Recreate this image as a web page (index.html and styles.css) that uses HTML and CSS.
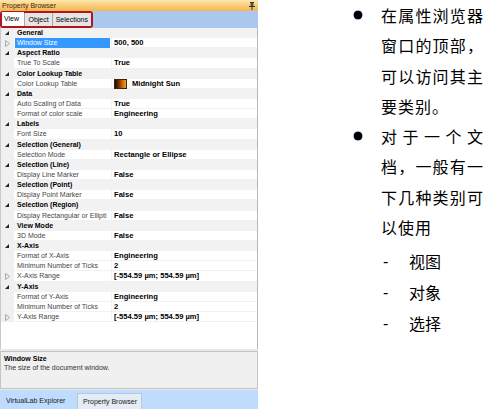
FILE: index.html
```html
<!DOCTYPE html>
<html>
<head>
<meta charset="utf-8">
<link rel="stylesheet" href="styles.css">
</head>
<body>
<div class="page">
  <div class="panel">
    <div class="titlebar">
      <span class="title">Property Browser</span>
      <svg class="pin" width="6" height="8" viewBox="0 0 6 8"><rect x="1" y="0" width="4" height="1" fill="#333"/><rect x="1.5" y="1" width="3" height="3" fill="#555"/><rect x="0" y="4" width="6" height="1" fill="#333"/><rect x="2.5" y="5" width="1" height="3" fill="#333"/></svg>
    </div>
    <div class="tabstrip">
      <div class="tabs">
        <div class="tab active">View</div>
        <div class="tab">Object</div>
        <div class="tab">Selections</div>
      </div>
    </div>
    <div class="grid">
      <div class="row cat"><span class="gut"><i class="tri"></i></span><span class="name">General</span></div>
      <div class="row sel"><span class="gut"><svg class="open" width="5" height="7" viewBox="0 0 5 7"><polygon points="0.5,0.5 4.5,3.5 0.5,6.5" fill="none" stroke="#a8a8a8" stroke-width="1"/></svg></span><span class="name">Window Size</span><span class="val">500, 500</span></div>
      <div class="row cat"><span class="gut"><i class="tri"></i></span><span class="name">Aspect Ratio</span></div>
      <div class="row"><span class="gut"></span><span class="name">True To Scale</span><span class="val">True</span></div>
      <div class="row cat"><span class="gut"><i class="tri"></i></span><span class="name">Color Lookup Table</span></div>
      <div class="row"><span class="gut"></span><span class="name">Color Lookup Table</span><span class="val"><i class="swatch"></i>Midnight Sun</span></div>
      <div class="row cat"><span class="gut"><i class="tri"></i></span><span class="name">Data</span></div>
      <div class="row"><span class="gut"></span><span class="name">Auto Scaling of Data</span><span class="val">True</span></div>
      <div class="row"><span class="gut"></span><span class="name">Format of color scale</span><span class="val">Engineering</span></div>
      <div class="row cat"><span class="gut"><i class="tri"></i></span><span class="name">Labels</span></div>
      <div class="row"><span class="gut"></span><span class="name">Font Size</span><span class="val">10</span></div>
      <div class="row cat"><span class="gut"><i class="tri"></i></span><span class="name">Selection (General)</span></div>
      <div class="row"><span class="gut"></span><span class="name">Selection Mode</span><span class="val">Rectangle or Ellipse</span></div>
      <div class="row cat"><span class="gut"><i class="tri"></i></span><span class="name">Selection (Line)</span></div>
      <div class="row"><span class="gut"></span><span class="name">Display Line Marker</span><span class="val">False</span></div>
      <div class="row cat"><span class="gut"><i class="tri"></i></span><span class="name">Selection (Point)</span></div>
      <div class="row"><span class="gut"></span><span class="name">Display Point Marker</span><span class="val">False</span></div>
      <div class="row cat"><span class="gut"><i class="tri"></i></span><span class="name">Selection (Region)</span></div>
      <div class="row"><span class="gut"></span><span class="name">Display Rectangular or Ellipti</span><span class="val">False</span></div>
      <div class="row cat"><span class="gut"><i class="tri"></i></span><span class="name">View Mode</span></div>
      <div class="row"><span class="gut"></span><span class="name">3D Mode</span><span class="val">False</span></div>
      <div class="row cat"><span class="gut"><i class="tri"></i></span><span class="name">X-Axis</span></div>
      <div class="row"><span class="gut"></span><span class="name">Format of X-Axis</span><span class="val">Engineering</span></div>
      <div class="row"><span class="gut"></span><span class="name">Minimum Number of Ticks</span><span class="val">2</span></div>
      <div class="row"><span class="gut"><svg class="open" width="5" height="7" viewBox="0 0 5 7"><polygon points="0.5,0.5 4.5,3.5 0.5,6.5" fill="none" stroke="#a8a8a8" stroke-width="1"/></svg></span><span class="name">X-Axis Range</span><span class="val">[-554.59 µm; 554.59 µm]</span></div>
      <div class="row cat"><span class="gut"><i class="tri"></i></span><span class="name">Y-Axis</span></div>
      <div class="row"><span class="gut"></span><span class="name">Format of Y-Axis</span><span class="val">Engineering</span></div>
      <div class="row"><span class="gut"></span><span class="name">Minimum Number of Ticks</span><span class="val">2</span></div>
      <div class="row"><span class="gut"><svg class="open" width="5" height="7" viewBox="0 0 5 7"><polygon points="0.5,0.5 4.5,3.5 0.5,6.5" fill="none" stroke="#a8a8a8" stroke-width="1"/></svg></span><span class="name">Y-Axis Range</span><span class="val">[-554.59 µm; 554.59 µm]</span></div>
    </div>
    <div class="desc">
      <div class="desc-title">Window Size</div>
      <div class="desc-text">The size of the document window.</div>
    </div>
    <div class="bottomtabs">
      <div class="btab">VirtualLab Explorer</div>
      <div class="btab current">Property Browser</div>
    </div>
  </div>
  <div class="notes">
    <div class="item">
      <span class="bullet"><i class="dot"></i></span>
      <div class="item-text">在属性浏览器窗口的顶部，可以访问其主要类别。</div>
    </div>
    <div class="item">
      <span class="bullet"><i class="dot"></i></span>
      <div class="item-text">对于一个文档，一般有一下几种类别可以使用</div>
    </div>
    <div class="sublist">
      <div class="subitem"><span class="dash">-</span><span>视图</span></div>
      <div class="subitem"><span class="dash">-</span><span>对象</span></div>
      <div class="subitem"><span class="dash">-</span><span>选择</span></div>
    </div>
  </div>
</div>
</body>
</html>
```

FILE: styles.css
```css
html, body {
  margin: 0;
  padding: 0;
  background: #ffffff;
}

.page {
  width: 490px;
  height: 409px;
  display: flex;
  overflow: hidden;
}

.panel {
  width: 258px;
  height: 409px;
  flex: none;
  display: flex;
  flex-direction: column;
  background: #e9e9e9;
  font-family: "Liberation Sans", Arial, sans-serif;
  font-size: 7px;
  color: #000;
}

.titlebar {
  height: 11px;
  flex: none;
  display: flex;
  align-items: center;
  justify-content: space-between;
  padding: 0 2px 0 2px;
  background: linear-gradient(to bottom, #fde8b0 0%, #f9cf7e 45%, #f5b650 100%);
  box-sizing: border-box;
}

.title {
  color: #3a2a10;
  line-height: 11px;
}

.pin {
  display: block;
  margin-right: 1px;
}

.tabstrip {
  height: 17px;
  flex: none;
  background: #a9c7ef;
  display: flex;
  align-items: stretch;
}

.tabs {
  display: flex;
  align-items: flex-end;
  width: 93px;
  box-sizing: border-box;
  border: 2px solid #b3141c;
  border-radius: 3px;
  padding: 0;
  background: #dcdcdc;
}

.tab {
  height: 13px;
  line-height: 13px;
  padding: 0 3px;
  background: #e6e6e6;
  border-left: 1px solid #a8a8a8;
  color: #000;
}

.tab.active {
  background: #ffffff;
  border-left: none;
  width: 24px;
  height: 14px;
  padding: 0 0 0 2px;
}

.tab:nth-child(2) {
  width: 22px;
}

.grid {
  height: 321px;
  flex: none;
  background: #ffffff;
  border-left: 1px solid #c9c9c9;
  border-right: 1px solid #b8b8b8;
  box-sizing: border-box;
  overflow: hidden;
}

.row {
  display: grid;
  grid-template-columns: 13px 97px 1fr;
  height: 10.15px;
  line-height: 10.15px;
  box-sizing: border-box;
  box-shadow: inset 0 -1px 0 #f1f1f1;
}

.gut {
  background: #f0f0f0;
  display: flex;
  align-items: center;
  padding-left: 4px;
}

.row.cat {
  background: #f2f2f2;
  box-shadow: none;
}

.name {
  padding-left: 3px;
  white-space: nowrap;
  overflow: hidden;
  color: #464646;
}

.row.cat .name {
  font-weight: bold;
  color: #000;
  overflow: visible;
}

.row.sel .name {
  background: #3399ff;
  color: #ffffff;
  margin: 0 1px 0 1px;
  padding-left: 2px;
}

.val {
  padding-left: 2px;
  font-weight: bold;
  font-size: 7.6px;
  white-space: nowrap;
  display: flex;
  align-items: center;
  color: #000;
  border-left: 1px solid #f3f3f3;
}

.tri {
  display: block;
  width: 0;
  height: 0;
  border-left: 4px solid transparent;
  border-bottom: 4px solid #222;
}

.open {
  display: block;
}

.swatch {
  display: block;
  width: 11px;
  height: 8px;
  margin-right: 5px;
  border: 1px solid #3a2410;
  background: linear-gradient(to right, #1e0800 0%, #7a2e00 35%, #d06a08 70%, #f4a030 100%);
}

.desc {
  margin-top: 2px;
  height: 38px;
  flex: none;
  box-sizing: border-box;
  border: 1px solid #c4c4c4;
  background: #f0f0f0;
  padding: 2px 3px;
  line-height: 9px;
}

.desc-title {
  font-weight: bold;
  color: #000;
}

.desc-text {
  color: #333;
}

.bottomtabs {
  margin-top: 1px;
  height: 19px;
  flex: none;
  background: #bfdbfd;
  display: flex;
  align-items: flex-end;
}

.btab {
  height: 16px;
  line-height: 16px;
  color: #1a1a1a;
}

.btab:first-child {
  width: 66px;
  padding-left: 6px;
}

.btab.current {
  margin-left: 5px;
  background: #e6ecf5;
  border: 1px solid #b7c7dc;
  border-bottom: none;
  box-sizing: border-box;
  width: 65px;
  padding: 0 0 0 5px;
}

.notes {
  margin-left: 96px;
  font-family: "Noto Sans CJK SC", "Noto Sans CJK TC", sans-serif;
  font-size: 16px;
  line-height: 30.3px;
  color: #000;
}

.item {
  display: flex;
}

.bullet {
  width: 27px;
  flex: none;
  padding-top: 11px;
  box-sizing: border-box;
}

.dot {
  display: block;
  width: 8px;
  height: 8px;
  border-radius: 50%;
  background: #000;
  box-shadow: 0 0 0 0.5px #1d3d7a;
}

.item-text {
  width: 103px;
  text-align: justify;
  letter-spacing: 1px;
}

.sublist {
  margin-top: 4px;
  margin-left: 27px;
  line-height: 31px;
}

.subitem {
  display: flex;
}

.dash {
  width: 28px;
  flex: none;
  padding-left: 2px;
  box-sizing: border-box;
  font-family: "Liberation Sans", Arial, sans-serif;
}
```
